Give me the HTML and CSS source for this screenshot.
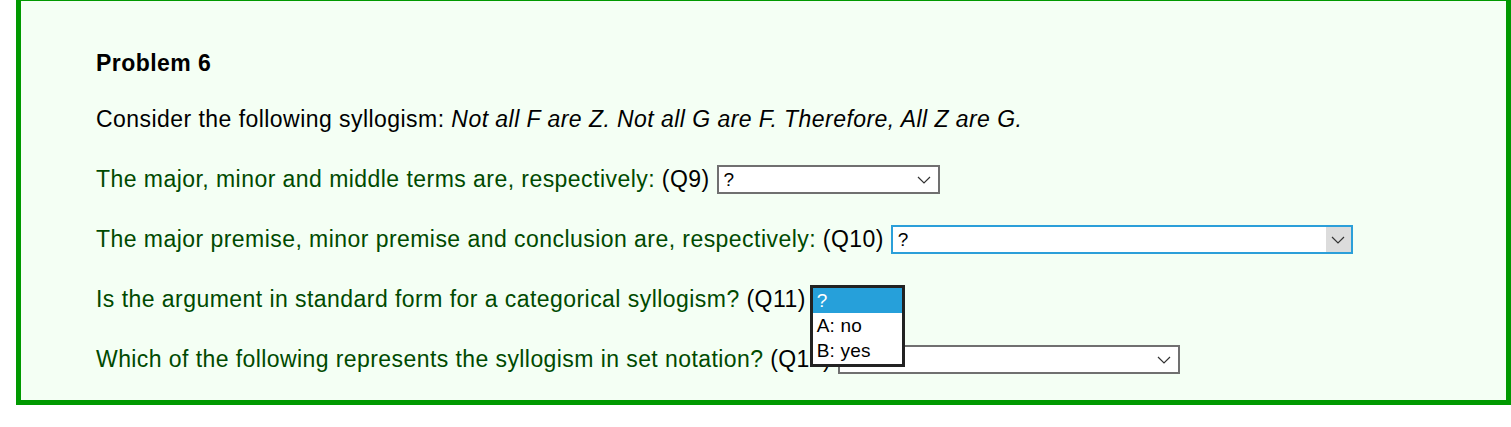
FILE: index.html
```html
<!DOCTYPE html>
<html>
<head>
<meta charset="utf-8">
<link rel="stylesheet" href="styles.css">
</head>
<body>
<div class="problem">
  <div class="title">Problem 6</div>
  <p class="intro">Consider the following syllogism: <em>Not all F are Z. Not all G are F. Therefore, All Z are G.</em></p>
  <p class="q">The major, minor and middle terms are, respectively: <span class="qn">(Q9)</span> <span class="sel w9"><span class="val">?</span><span class="arrow"><svg width="14" height="8" viewBox="0 0 14 8"><path d="M1 1 L7 7 L13 1" fill="none" stroke="#333" stroke-width="1.2"/></svg></span></span></p>
  <p class="q">The major premise, minor premise and conclusion are, respectively: <span class="qn">(Q10)</span> <span class="sel w10 focus"><span class="val">?</span><span class="arrow"><svg width="14" height="8" viewBox="0 0 14 8"><path d="M1 1 L7 7 L13 1" fill="none" stroke="#333" stroke-width="1.2"/></svg></span></span></p>
  <p class="q">Is the argument in standard form for a categorical syllogism? <span class="qn">(Q11)</span> <span class="wrap"><span class="sel w11"><span class="val">?</span><span class="arrow"><svg width="14" height="8" viewBox="0 0 14 8"><path d="M1 1 L7 7 L13 1" fill="none" stroke="#333" stroke-width="1.2"/></svg></span></span><span class="list"><span class="opt on">?</span><span class="opt">A: no</span><span class="opt">B: yes</span></span></span></p>
  <p class="q q12">Which of the following represents the syllogism in set notation? <span class="qn">(Q12)</span> <span class="sel w12"><span class="val">?</span><span class="arrow"><svg width="14" height="8" viewBox="0 0 14 8"><path d="M1 1 L7 7 L13 1" fill="none" stroke="#333" stroke-width="1.2"/></svg></span></span></p>
</div>
</body>
</html>
```
FILE: styles.css
```css
html, body { margin: 0; padding: 0; background: #ffffff; }
body { font-family: "Liberation Sans", Arial, sans-serif; overflow: hidden; }
.problem {
  margin: -4px 0 0 16px;
  width: 1495px;
  height: 409px;
  box-sizing: border-box;
  border: 5px solid #009900;
  background: #f4fff4;
  padding: 47px 0 0 75px;
  font-size: 23px;
  letter-spacing: 0.45px;
}
.title { font-weight: bold; line-height: 30px; height: 30px; color: #000; letter-spacing: 0.45px; }
.intro { margin: 26px 0 0 0; line-height: 30px; height: 30px; color: #000; }
.q { margin: 30px 0 0 0; line-height: 30px; height: 30px; color: #004a00; white-space: nowrap; }
.q12 { letter-spacing: 0.42px; }
.qn { color: #000; }
.sel {
  display: inline-flex;
  align-items: center;
  box-sizing: border-box;
  height: 29px;
  border: 2px solid #707070;
  background: #fff;
  vertical-align: middle;
  position: relative;
  top: -1px;
  font-size: 19px;
  letter-spacing: 0.2px;
  color: #000;
  line-height: 1;
}
.val { flex: 1; padding-left: 5px; }
.arrow { width: 25px; height: 100%; display: flex; align-items: center; justify-content: center; margin-right: 1px; }
.arrow svg { display: block; }
.w9 { width: 223px; }
.w10 { width: 462px; }
.w11 { width: 92px; }
.w12 { width: 342px; }
.focus { border-color: #2b9fd9; }
.focus .arrow { background: #dcdcdc; margin-right: 0; }
.wrap { position: relative; display: inline-block; vertical-align: middle; top: -1px; height: 29px; }
.wrap .sel { top: 0; vertical-align: top; }
.list {
  position: absolute;
  z-index: 10;
  left: -3px;
  top: 0;
  width: 95px;
  height: 82px;
  box-sizing: border-box;
  border: 3px solid #222;
  background: #fff;
  font-size: 19px;
  letter-spacing: 0.2px;
  line-height: 25px;
  color: #000;
  display: flex;
  flex-direction: column;
}
.opt { display: block; height: 25px; padding-left: 4px; white-space: nowrap; }
.opt.on { background: #26a0da; color: #fff; }
```
